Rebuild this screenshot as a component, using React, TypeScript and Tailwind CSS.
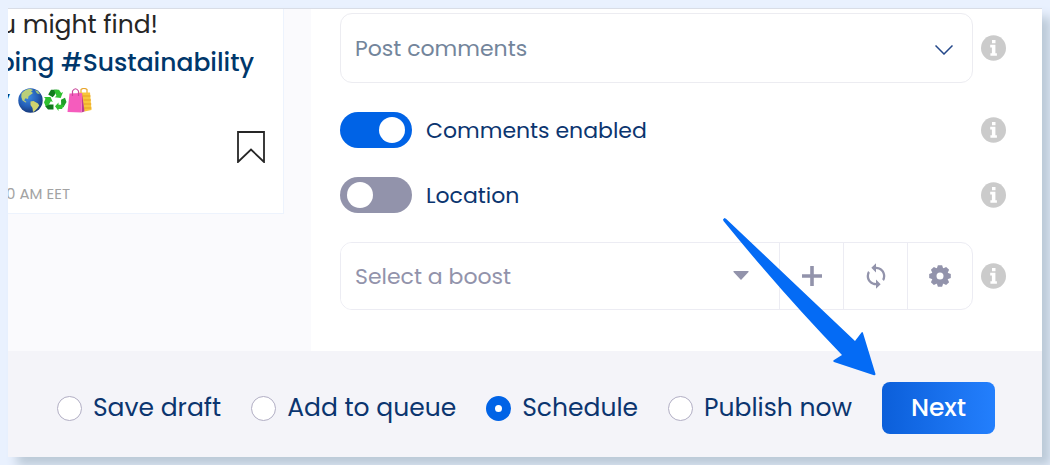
import React from "react";
import { MdSync } from "react-icons/md";

const postActions = [
  { value: "draft", label: "Save draft" },
  { value: "queue", label: "Add to queue" },
  { value: "schedule", label: "Schedule" },
  { value: "publish", label: "Publish now" },
];

function InfoButton({ label }: { label: string }) {
  return (
    <button type="button" aria-label={label} className="ml-2 shrink-0">
      <svg viewBox="0 0 25 26" className="h-[26px] w-[25px]">
        <ellipse cx="12.5" cy="13" rx="12.5" ry="12.8" fill="#cbcbcb" />
        <path
          d="M11 5h3.5v3.2H11zM9.2 9.8h5.2v8.4h1.5v2.6H9.4v-2.6h1.5v-5.7H9.2z"
          fill="#fff"
        />
      </svg>
    </button>
  );
}

function ToggleRow({ label, on }: { label: string; on?: boolean }) {
  return (
    <div className="flex h-9 items-center justify-between">
      <label className="flex items-center gap-[14px] text-[22px] text-[#0b356f]">
        <input
          type="checkbox"
          role="switch"
          defaultChecked={on}
          className="flex h-9 w-[72px] shrink-0 appearance-none items-center rounded-full bg-[#9293ab] px-[7px] before:size-[26px] before:rounded-full before:bg-white before:content-[''] checked:justify-end checked:bg-[#0063e6]"
        />
        {label}
      </label>
      <InfoButton label={`About ${label}`} />
    </div>
  );
}

function GlobeEmoji() {
  return (
    <svg viewBox="0 0 25 25" role="img" aria-label="Globe" className="size-[25px] shrink-0">
      <defs>
        <radialGradient id="sea" cx="0.4" cy="0.35" r="0.65">
          <stop offset="0" stopColor="#3f8be0" />
          <stop offset="0.6" stopColor="#245fb8" />
          <stop offset="1" stopColor="#173a7c" />
        </radialGradient>
      </defs>
      <circle cx="12.5" cy="12.5" r="12.2" fill="url(#sea)" />
      <path
        d="M3.5 5.5C6 2.500 9 1 12 .8l3 1.200-2 1.500 2 1.500-2 1.600-2.500 1.700-.5 2.700-2.500-.8-1.300 2 2.300 1.700-1 .5-3-2-1.200-3.500z"
        fill="#b9cf7a"
      />
      <path d="M17 2l3 1.200 2 3-3-.700z" fill="#9fc37a" />
      <path
        d="M12.500 13.500l3-.500 4.500 2.500 1.200 2-2 3-2.700 2.700-1.500.8-.5-4-2-3z"
        fill="#cfd26e"
      />
    </svg>
  );
}

function RecycleEmoji() {
  return (
    <svg viewBox="0 0 24 24" role="img" aria-label="Recycle" className="size-6 shrink-0">
      <path d="M5.200 6.500L8 1.800h6.500L11.300 7.500 9.700 9.300z" fill="#117a1c" />
      <path d="M11 1.800h5l2.200 3.300 1.800-1-2.300 6-6.200-.8 1.900-1.200z" fill="#2fc02f" />
      <path d="M18 11.700l4-2 1.500 4.300-3 5.300-5-.3 2.700-2.500z" fill="#1f9e28" />
      <path d="M12 18.300l3.500-3.800v2.200h5.500l-2 4.300h-3.500v2z" fill="#2fc02f" />
      <path d="M4 16.500h6.500v5H5l-2.800-3.300z" fill="#117a1c" />
      <path d="M1 9h6.500l2.300 5-2-.8-2.300 4-3 .8L1 14.300l1.500-3.500z" fill="#2fc02f" />
    </svg>
  );
}

function BagsEmoji() {
  return (
    <svg viewBox="0 0 25 25" role="img" aria-label="Shopping bags" className="size-[25px] shrink-0">
      <path d="M14 5V1.500q3-2 6 0V5" fill="none" stroke="#e8a52c" strokeWidth="1.200" />
      <path d="M11 4.500h12L24.500 22l-7 1.500z" fill="#f8c63a" />
      <path d="M16 8h7.500M16.500 12h7.500M17 16h7.300M17 20h7.400" stroke="#e79d25" strokeWidth="1.200" />
      <path d="M15 5l2.500 18.500-3 1z" fill="#bd3b94" />
      <path d="M2.500 5.500L15 5l-.5 19.500L.5 24z" fill="#f55cbd" />
      <path d="M5.500 8V3q3-4.500 6 0v5" fill="none" stroke="#c9489b" strokeWidth="1.200" />
    </svg>
  );
}

function PostPreview() {
  return (
    <aside className="w-[303px] shrink-0 bg-[#fafafd]">
      <div className="mr-[27px] overflow-hidden border-r border-b border-[#edf3fd] bg-white">
        <div className="-mt-[3px] text-[25px] leading-[38px] whitespace-nowrap text-[#262626]">
          <p className="flex w-[150px] justify-end overflow-hidden">u might find!</p>
          <p className="flex w-[246px] justify-end overflow-hidden font-medium text-[#00376b]">
            ping #Sustainability
          </p>
          <div className="flex h-9 w-[84px] items-center justify-end overflow-hidden">
            <span className="mr-2 font-medium text-[#00376b]">y</span>
            <GlobeEmoji />
            <RecycleEmoji />
            <BagsEmoji />
          </div>
        </div>
        <div className="mt-[13px] flex justify-end pr-[18px]">
          <button type="button" aria-label="Save post">
            <svg viewBox="0 0 28 32" className="h-8 w-7" fill="none">
              <path d="M1 1h26v30L14 18.500 1 31z" stroke="#262626" strokeWidth="1.800" />
            </svg>
          </button>
        </div>
        <p className="mt-[21px] mb-[9px] flex w-[62px] justify-end overflow-hidden text-[15px] leading-5 whitespace-nowrap text-[#a3a3a3]">
          0 AM EET
        </p>
      </div>
    </aside>
  );
}

function GearIcon() {
  return (
    <svg viewBox="-11 -11 22 22" className="size-[22px]">
      <circle r="6" fill="none" stroke="#9293ab" strokeWidth="5" />
      {[0, 45, 90, 135, 180, 225, 270, 315].map((angle) => (
        <path
          key={angle}
          d="M-3.200-7.500L-2.100-10.800H2.100L3.200-7.500z"
          fill="#9293ab"
          transform={`rotate(${angle})`}
        />
      ))}
    </svg>
  );
}

function PostForm() {
  return (
    <section className="flex min-w-0 flex-1 flex-col gap-[29px] bg-white pt-1 pr-9 pb-10 pl-[29px]">
      <div className="flex items-center">
        <div className="relative flex-1">
          <select
            aria-label="Post comments"
            className="block h-[70px] w-full appearance-none rounded-xl border border-[#ececf1] bg-white pr-12 pl-[14px] text-[22px] text-[#73859b]"
          >
            <option>Post comments</option>
          </select>
          <svg
            viewBox="0 0 18 10"
            className="pointer-events-none absolute top-8 right-5 h-[10px] w-[18px]"
            fill="none"
          >
            <path d="M.5.5L9 9 17.500.5" stroke="#24488a" strokeWidth="1.500" />
          </svg>
        </div>
        <InfoButton label="About post comments" />
      </div>

      <ToggleRow label="Comments enabled" on />
      <ToggleRow label="Location" />

      <div className="flex items-center">
        <div className="flex h-[68px] flex-1 divide-x divide-[#ececf3] overflow-hidden rounded-xl border border-[#ececf3]">
          <div className="relative flex-1">
            <select
              aria-label="Boost"
              className="block h-full w-full appearance-none bg-white pr-12 pl-[14px] text-[22px] text-[#9293ab]"
            >
              <option>Select a boost</option>
            </select>
            <svg
              viewBox="0 0 16 9"
              className="pointer-events-none absolute top-[28px] right-[30px] h-[9px] w-4"
            >
              <path d="M.5 0h15v1L8 9 .5 1z" fill="#9293ab" />
            </svg>
          </div>
          <button type="button" aria-label="Add boost" className="flex w-16 items-center justify-center">
            <svg viewBox="0 0 22 22" className="size-[22px]">
              <path d="M9.200 1h3.600v8.200H21v3.600h-8.200V21H9.200v-8.200H1V9.200h8.200z" fill="#9293ab" />
            </svg>
          </button>
          <button type="button" aria-label="Refresh boosts" className="flex w-16 items-center justify-center">
            <MdSync className="size-7 text-[#9293ab]" />
          </button>
          <button type="button" aria-label="Boost settings" className="flex w-16 items-center justify-center">
            <GearIcon />
          </button>
        </div>
        <InfoButton label="About boosts" />
      </div>
    </section>
  );
}

export default function App() {
  return (
    <div className="flex min-h-screen bg-[#e9f1fe] p-2 font-['Poppins','Inter',sans-serif]">
      <main className="relative flex flex-1 flex-col border-t border-[#d9dde6] shadow-[9px_9px_10px_#bccad8]">
        <div className="flex flex-1">
          <PostPreview />
          <PostForm />
        </div>

        <footer className="flex h-[106px] items-center justify-end gap-[30px] bg-[#f4f4f9] pt-2 pr-[47px]">
          {postActions.map((action) => (
            <label
              key={action.value}
              className="flex items-center gap-[11px] text-[25px] whitespace-nowrap text-[#0b356f]"
            >
              <input
                type="radio"
                name="post-action"
                value={action.value}
                defaultChecked={action.value === "schedule"}
                className="size-[25px] shrink-0 appearance-none rounded-full border border-[#b1aec4] bg-white checked:border-[9px] checked:border-[#0063e6]"
              />
              {action.label}
            </label>
          ))}
          <button
            type="button"
            className="h-[52px] w-[113px] rounded-lg bg-linear-to-r from-[#0b5fda] to-[#237ffd] text-[25px] font-medium text-white"
          >
            Next
          </button>
        </footer>

        <svg
          viewBox="0 0 153 158"
          className="pointer-events-none absolute right-[166px] bottom-[81px] h-[158px] w-[153px]"
        >
          <path
            d="M0 1.500L1.500 0 3 .7 132 123l6.500-8.500q1-1 1.500.5L152.500 156q0 1.500-1.500 1.300L111 144q-1.500-1 0-2l8-5Q60 76 .5 3z"
            fill="#046bf5"
          />
        </svg>
      </main>
    </div>
  );
}
